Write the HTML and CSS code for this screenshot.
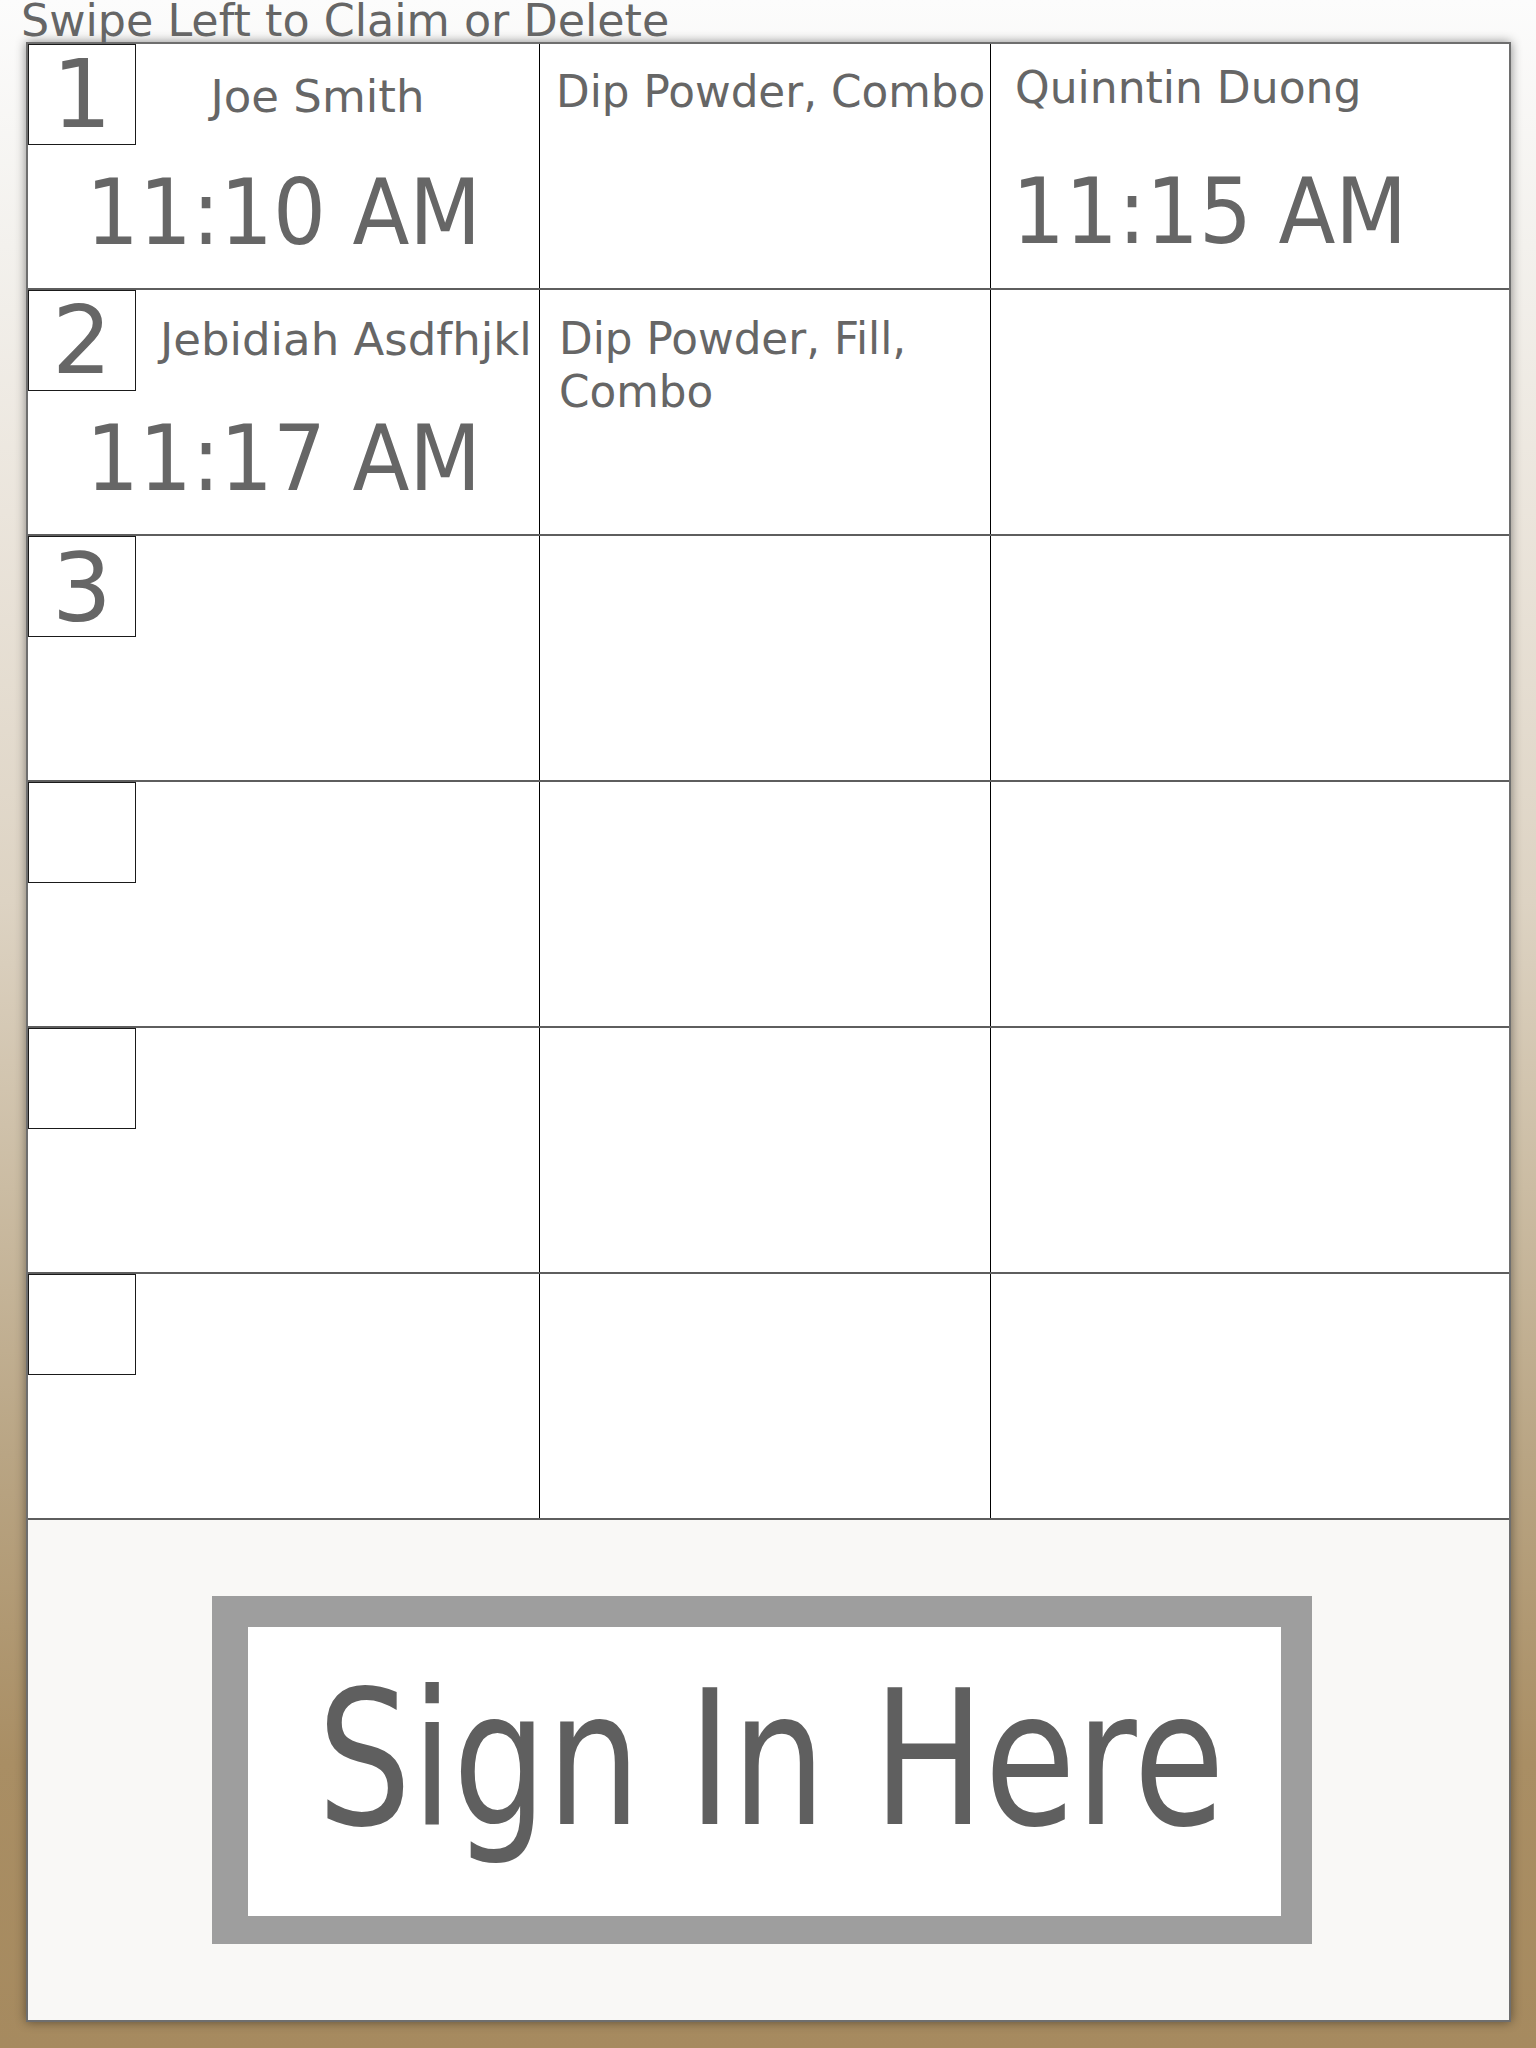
FILE: index.html
```html
<!DOCTYPE html>
<html lang="en">
<head>
<meta charset="utf-8">
<title>Sign In Queue</title>
<link rel="stylesheet" href="styles.css">
</head>
<body>
<h1 class="title">Swipe Left to Claim or Delete</h1>
<div class="board">
  <div class="rows">
    <div class="row">
      <div class="cell cell-client">
        <div class="client-head">
          <div class="ticket">1</div>
          <div class="name">Joe Smith</div>
        </div>
        <div class="time time-center"><span>11:10 AM</span></div>
      </div>
      <div class="cell cell-service"><p class="service">Dip Powder, Combo</p></div>
      <div class="cell cell-tech">
        <div class="tech-name">Quinntin Duong</div>
        <div class="time time-left"><span>11:15 AM</span></div>
      </div>
    </div>
    <div class="row">
      <div class="cell cell-client">
        <div class="client-head">
          <div class="ticket">2</div>
          <div class="name name-fit">Jebidiah Asdfhjkl</div>
        </div>
        <div class="time time-center"><span>11:17 AM</span></div>
      </div>
      <div class="cell cell-service"><p class="service service-low">Dip Powder, Fill, Combo</p></div>
      <div class="cell cell-tech"></div>
    </div>
    <div class="row">
      <div class="cell cell-client">
        <div class="client-head"><div class="ticket ticket-low">3</div></div>
      </div>
      <div class="cell cell-service"></div>
      <div class="cell cell-tech"></div>
    </div>
    <div class="row">
      <div class="cell cell-client">
        <div class="client-head"><div class="ticket"></div></div>
      </div>
      <div class="cell cell-service"></div>
      <div class="cell cell-tech"></div>
    </div>
    <div class="row">
      <div class="cell cell-client">
        <div class="client-head"><div class="ticket"></div></div>
      </div>
      <div class="cell cell-service"></div>
      <div class="cell cell-tech"></div>
    </div>
    <div class="row">
      <div class="cell cell-client">
        <div class="client-head"><div class="ticket"></div></div>
      </div>
      <div class="cell cell-service"></div>
      <div class="cell cell-tech"></div>
    </div>
  </div>
  <div class="signin-panel">
    <div class="signin-btn"><span>Sign In Here</span></div>
  </div>
</div>
</body>
</html>
```
FILE: styles.css
```css
html, body {
  margin: 0;
  padding: 0;
}

body {
  min-height: 2048px;
  font-family: "DejaVu Sans", Verdana, sans-serif;
  color: #666666;
  background: linear-gradient(to bottom,
    #fcfcfc 0%,
    #f3f1ed 12%,
    #ebe5dc 25%,
    #ddd3c3 44%,
    #cbbca3 58%,
    #b9a584 71%,
    #a98e64 86%,
    #a68a5f 100%);
}

.title {
  margin: 0 0 2px 0;
  padding: 1px 0 0 21px;
  font-size: 44.4px;
  font-weight: normal;
  line-height: 39px;
  color: #666666;
  white-space: nowrap;
}

.board {
  box-sizing: border-box;
  margin-left: 26px;
  width: 1485px;
  border: 2px solid #6e6e6e;
  background: #ffffff;
  box-shadow: 0 0 10px rgba(0, 0, 0, 0.45);
}

.row {
  box-sizing: border-box;
  display: grid;
  grid-template-columns: 511px 452px 1fr;
  height: 246px;
  border-bottom: 2px solid #5e5e5e;
}

.cell {
  box-sizing: border-box;
  min-width: 0;
}

.cell-service {
  border-left: 1px solid #000000;
  border-right: 1px solid #000000;
  padding: 21px 0 0 16px;
}

.client-head {
  display: flex;
  align-items: flex-start;
}

.ticket {
  box-sizing: border-box;
  flex: none;
  width: 108px;
  height: 101px;
  border: 1px solid #1a1a1a;
  font-size: 94px;
  line-height: 99px;
  text-align: center;
  color: #666666;
}

.ticket-low {
  line-height: 104px;
}

.name {
  flex: none;
  width: 323px;
  margin: 26px 0 0 20px;
  font-size: 45px;
  line-height: 53px;
  text-align: center;
  white-space: nowrap;
}

.name-fit {
  margin-top: 23px;
  margin-left: 24px;
  text-align: left;
}

.time {
  margin-top: 23px;
  font-size: 90px;
  line-height: 90px;
  white-space: nowrap;
}

.time span {
  display: inline-block;
  transform: scaleX(0.925);
}

.time-center {
  text-align: center;
}

.time-center span {
  transform-origin: center center;
}

.cell-tech {
  padding: 17px 0 0 21px;
}

.tech-name {
  padding-left: 3px;
  font-size: 44px;
  line-height: 53px;
  white-space: nowrap;
}

.time-left {
  margin-top: 53px;
}

.time-left span {
  transform-origin: left center;
}

.service {
  margin: 0;
  font-size: 43.7px;
  line-height: 53px;
}

.service-low {
  margin-top: 1px;
  padding-left: 3px;
}

.signin-panel {
  box-sizing: border-box;
  height: 500px;
  background: #f9f8f6;
  padding: 76px 0 0 184px;
}

.signin-btn {
  box-sizing: border-box;
  width: 1100px;
  height: 348px;
  border-style: solid;
  border-color: #9e9e9e;
  border-width: 31px 31px 28px 36px;
  background: #ffffff;
  display: flex;
  justify-content: center;
  align-items: flex-start;
  padding: 38px 0 0 14px;
}

.signin-btn span {
  flex: none;
  display: block;
  font-size: 188px;
  line-height: 188px;
  color: #5f5f5f;
  white-space: nowrap;
  transform: scaleX(0.789);
  transform-origin: center center;
}
```
